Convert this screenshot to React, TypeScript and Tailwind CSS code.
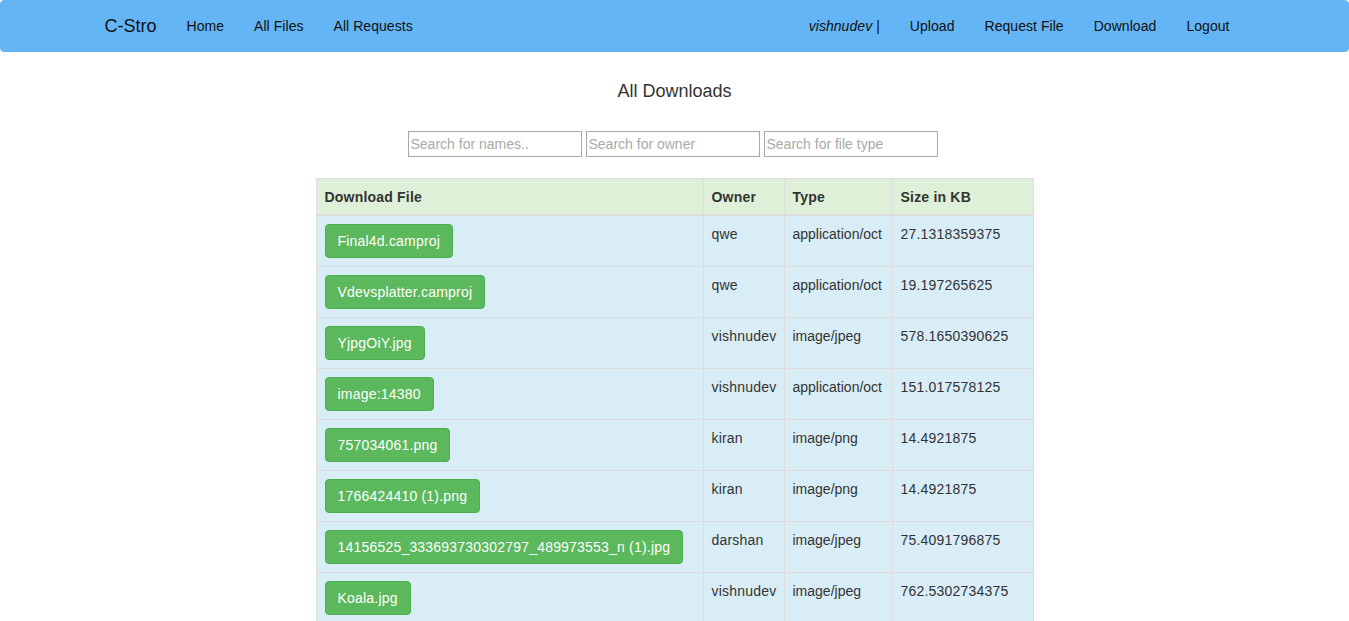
import React from 'react'

const rows = [
    { name: 'Final4d.camproj', owner: 'qwe', type: 'application/oct', size: '27.1318359375' },
    { name: 'Vdevsplatter.camproj', owner: 'qwe', type: 'application/oct', size: '19.197265625' },
    { name: 'YjpgOiY.jpg', owner: 'vishnudev', type: 'image/jpeg', size: '578.1650390625' },
    { name: 'image:14380', owner: 'vishnudev', type: 'application/oct', size: '151.017578125' },
    { name: '757034061.png', owner: 'kiran', type: 'image/png', size: '14.4921875' },
    { name: '1766424410 (1).png', owner: 'kiran', type: 'image/png', size: '14.4921875' },
    { name: '14156525_333693730302797_489973553_n (1).jpg', owner: 'darshan', type: 'image/jpeg', size: '75.4091796875' },
    { name: 'Koala.jpg', owner: 'vishnudev', type: 'image/jpeg', size: '762.5302734375' },
];

function App() {
    return (
        <div className="min-h-screen bg-white text-[14px] leading-[20px] text-[#333] tracking-[0.2px]" style={{ fontFamily: '"Liberation Sans", Arial, sans-serif' }}>
            <nav className="bg-[#64b5f6] border border-[#64b5f6] rounded-[4px] min-h-[52px] mb-[20px] tracking-[0.05px]">
                <div className="w-[1170px] mx-auto px-[15px] flex justify-between">
                    <div className="flex">
                        <a className="text-[18px] leading-[20px] py-[15px] pr-[15px] text-[#111] tracking-normal">C-Stro</a>
                        <a className="p-[15px] text-[#111]">Home</a>
                        <a className="p-[15px] text-[#111]">All Files</a>
                        <a className="p-[15px] text-[#111]">All Requests</a>
                    </div>
                    <div className="flex">
                        <span className="p-[15px] text-[#111]"><i>vishnudev</i> |</span>
                        <a className="p-[15px] text-[#111]">Upload</a>
                        <a className="p-[15px] text-[#111]">Request File</a>
                        <a className="p-[15px] text-[#111]">Download</a>
                        <a className="p-[15px] text-[#111]">Logout</a>
                    </div>
                </div>
            </nav>

            <h4 className="text-center text-[18px] leading-[20px] mt-[29px] mb-[0px] tracking-normal">All Downloads</h4>

            <div className="flex justify-center gap-[4px] mt-[30px] pr-[4px] tracking-normal">
                <input placeholder="Search for names.." className="w-[174px] h-[26px] border border-[#a9a9a9] px-[2px] text-[14px] placeholder:text-[#a9a9a9] outline-none" />
                <input placeholder="Search for owner" className="w-[174px] h-[26px] border border-[#a9a9a9] px-[2px] text-[14px] placeholder:text-[#a9a9a9] outline-none" />
                <input placeholder="Search for file type" className="w-[174px] h-[26px] border border-[#a9a9a9] px-[2px] text-[14px] placeholder:text-[#a9a9a9] outline-none" />
            </div>

            <table className="mx-auto mt-[21px] w-[718px] table-fixed border-collapse border border-[#ddd]">
                <thead>
                    <tr className="bg-[#dff0d8]">
                        <th className="w-[387px] text-left font-bold pt-[8px] pb-[7px] px-[8px] border border-[#ddd] border-b-2">Download File</th>
                        <th className="w-[81px] text-left font-bold pt-[8px] pb-[7px] px-[8px] border border-[#ddd] border-b-2">Owner</th>
                        <th className="w-[108px] text-left font-bold pt-[8px] pb-[7px] px-[8px] border border-[#ddd] border-b-2">Type</th>
                        <th className="text-left font-bold pt-[8px] pb-[7px] px-[8px] border border-[#ddd] border-b-2">Size in KB</th>
                    </tr>
                </thead>
                <tbody>
                    {rows.map((r) => (
                        <tr key={r.name} className="bg-[#d9edf7]">
                            <td className="p-[8px] border border-[#ddd] align-top">
                                <button className="bg-[#5cb85c] border border-[#4cae4c] text-white rounded-[4px] px-[12px] py-[6px] leading-[20px] whitespace-nowrap">
                                    {r.name}
                                </button>
                            </td>
                            <td className="p-[8px] border border-[#ddd] align-top">{r.owner}</td>
                            <td className="p-[8px] border border-[#ddd] align-top whitespace-nowrap tracking-normal">{r.type}</td>
                            <td className="p-[8px] border border-[#ddd] align-top">{r.size}</td>
                        </tr>
                    ))}
                </tbody>
            </table>
        </div>
    );
}

export default App;
